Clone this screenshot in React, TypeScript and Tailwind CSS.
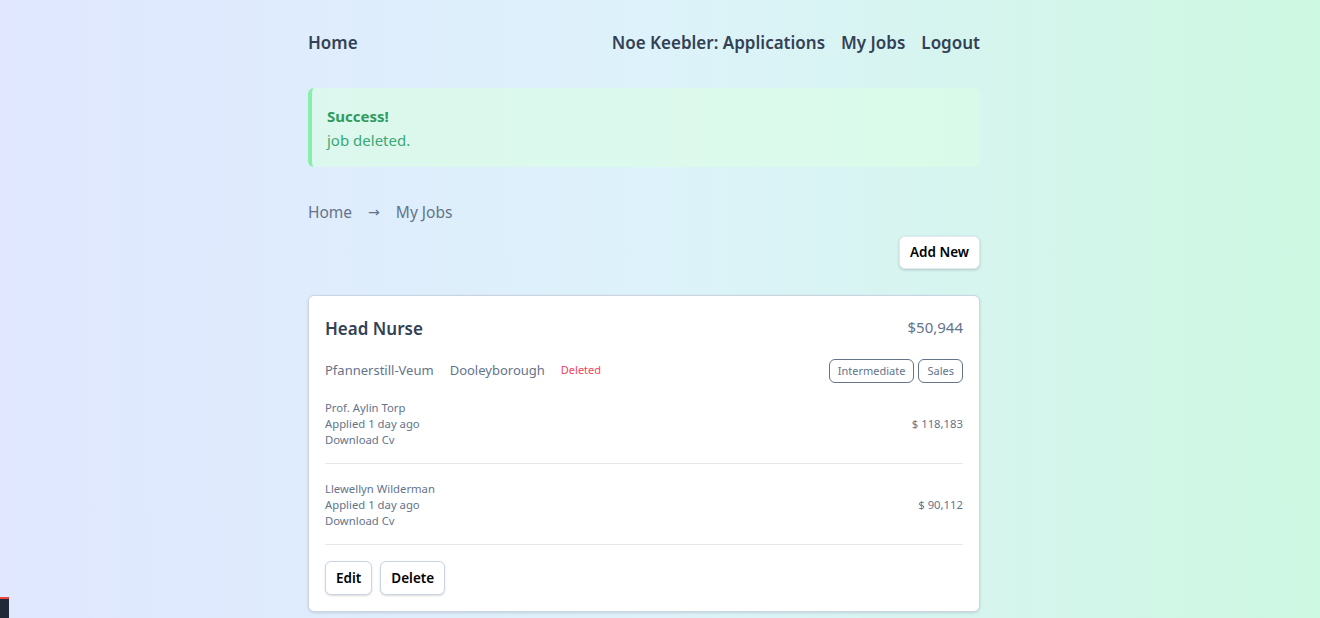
const font = { fontFamily: '"Noto Sans", "Open Sans", sans-serif' }

type Applicant = {
  name: string
  applied: string
  salary: string
}

const applicants: Applicant[] = [
  { name: "Prof. Aylin Torp", applied: "Applied 1 day ago", salary: "$ 118,183" },
  { name: "Llewellyn Wilderman", applied: "Applied 1 day ago", salary: "$ 90,112" },
]

function NavBar() {
  return (
    <nav className="flex h-[86px] items-center justify-between text-[17px] font-semibold text-[#334155]">
      <a href="#">Home</a>
      <div className="flex items-center gap-4">
        <a href="#">Noe Keebler: Applications</a>
        <a href="#">My Jobs</a>
        <a href="#">Logout</a>
      </div>
    </nav>
  )
}

function ApplicantRow({ applicant }: { applicant: Applicant }) {
  return (
    <div className="flex items-center justify-between border-b border-[#e5e7eb] pt-[17px] pb-[15px] text-[11.3px] leading-[16px] text-[#64748b]">
      <div>
        <div>{applicant.name}</div>
        <div>{applicant.applied}</div>
        <div>Download Cv</div>
      </div>
      <div>{applicant.salary}</div>
    </div>
  )
}

export default function App() {
  return (
    <div
      style={font}
      className="relative min-h-[618px] bg-gradient-to-r from-[#e0e7ff] via-[#ddf2fa] to-[#cdf8e1] pr-[32px]"
    >
      <div className="mx-auto w-[672px]">
        <NavBar />

        <div className="mt-[2px] rounded-md border-l-4 border-[#86efac] bg-[#dcfce7]/70 px-[15px] pt-[16px] pb-[15px]">
          <p className="text-[15px] leading-[24px] font-bold text-[#2f9b5c]">Success!</p>
          <p className="text-[15px] leading-[24px] text-[#3aa776]">job deleted.</p>
        </div>

        <div className="mt-[34px] flex items-center gap-4 text-[15.5px] text-[#64748b]">
          <a href="#">Home</a>
          <span style={{ fontFamily: '"DejaVu Sans", sans-serif' }} className="text-[14px]">
            →
          </span>
          <a href="#">My Jobs</a>
        </div>

        <div className="mt-[12px] flex justify-end">
          <button className="rounded-md border border-[#e2e8f0] bg-white px-[10px] py-[5px] text-[13.5px] font-semibold text-black shadow-[0_1px_3px_rgba(0,0,0,0.18)]">
            Add New
          </button>
        </div>

        <div className="mt-[26px] rounded-md border border-[#cbd5e1] bg-white px-[16px] pt-[18px] pb-[16px] shadow-[0_1px_3px_rgba(0,0,0,0.12)]">
          <div className="flex items-start justify-between">
            <h2 className="text-[17px] leading-[30px] font-semibold text-[#334155]">Head Nurse</h2>
            <div className="text-[15px] leading-[26px] text-[#64748b]">$50,944</div>
          </div>

          <div className="mt-[15px] flex items-center justify-between">
            <div className="flex items-center gap-4 text-[13px] text-[#64748b]">
              <span>Pfannerstill-Veum</span>
              <span>Dooleyborough</span>
              <span className="text-[11px] text-[#f43f5e]">Deleted</span>
            </div>
            <div className="flex gap-1">
              <span className="rounded-md border border-[#64748b] px-[8px] py-[3px] text-[11px] leading-[16px] text-[#64748b]">
                Intermediate
              </span>
              <span className="rounded-md border border-[#64748b] px-[8px] py-[3px] text-[11px] leading-[16px] text-[#64748b]">
                Sales
              </span>
            </div>
          </div>

          <div>
            {applicants.map((a) => (
              <ApplicantRow key={a.name} applicant={a} />
            ))}
          </div>

          <div className="mt-[16px] flex gap-2">
            <button className="rounded-md border border-[#cbd5e1] bg-white px-[10px] py-[6px] text-[13.5px] font-semibold text-black shadow-[0_1px_2px_rgba(0,0,0,0.15)]">
              Edit
            </button>
            <button className="rounded-md border border-[#cbd5e1] bg-white px-[10px] py-[6px] text-[13.5px] font-semibold text-black shadow-[0_1px_2px_rgba(0,0,0,0.15)]">
              Delete
            </button>
          </div>
        </div>
      </div>

      <div className="absolute bottom-0 left-0 h-[21px] w-[9px] border-t-2 border-[#ef4444] bg-[#1f2937]" />
    </div>
  )
}
